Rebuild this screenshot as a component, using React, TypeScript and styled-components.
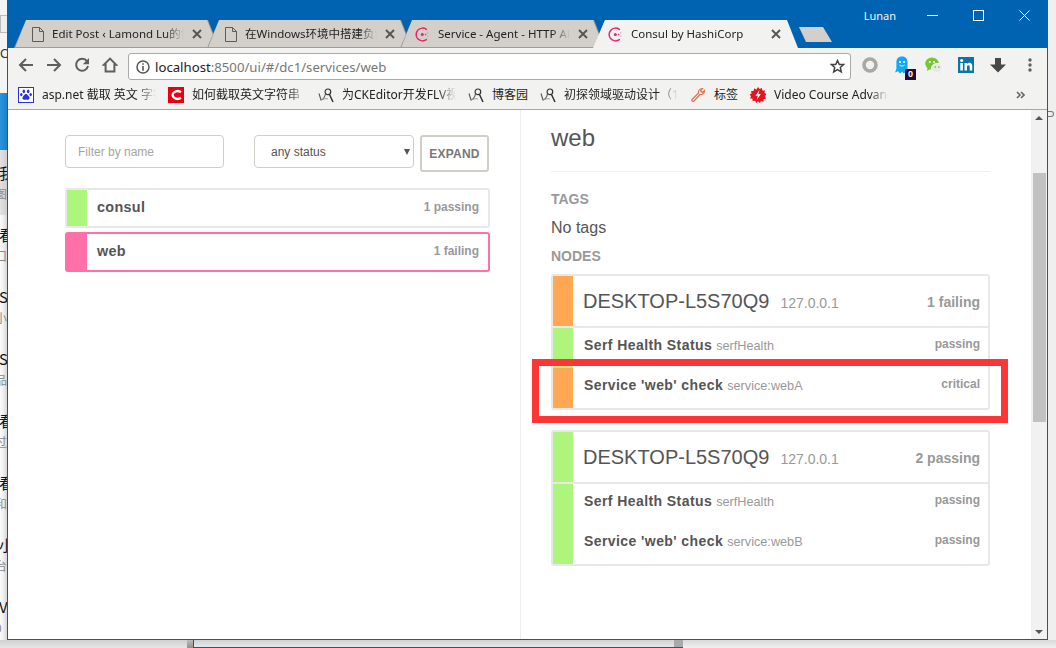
import React from "react";
import styled, { createGlobalStyle, css } from "styled-components";

const Global = createGlobalStyle`
  html, body { margin: 0; padding: 0; width: 1056px; height: 648px; overflow: hidden; background: #efefef; }
  * { box-sizing: border-box; }
  #root { width: 1056px; height: 648px; }
`;

const CHROME_FONT = `"Noto Sans", "Noto Sans CJK SC", sans-serif`;
const PAGE_FONT = `"Liberation Sans", Arial, sans-serif`;
const GREEN = "#aef57d";
const ORANGE = "#ffa752";
const PINK = "#ff70a9";

const Screen = styled.div`
  width: 1056px;
  height: 648px;
  display: grid;
  grid-template-columns: 7px 1041px 8px;
  grid-template-rows: 640px 8px;
  overflow: hidden;
  font-family: ${PAGE_FONT};
`;

/* ---- what lies behind the window ---- */
const BehindLeft = styled.div`
  display: flex;
  flex-direction: column;
  overflow: hidden;
  background: linear-gradient(to right, #fafafa 0, #f2f2f2 40%, #d6d6d6 100%);
`;
const BehindTop = styled.div`
  height: 93px;
  flex: none;
  background: #f4f4f4;
  padding-top: 15px;
  display: flex;
  flex-direction: column;
  gap: 13px;
`;
const BehindBox = styled.div`
  width: 7px;
  height: 18px;
  border: 1px solid #bbb;
  border-right: 0;
  background: #eee;
`;
const BehindLetter = styled.span`
  font: 13px/16px ${PAGE_FONT};
  color: #333;
`;
const BehindBlue = styled.div`
  height: 57px;
  flex: none;
  background: linear-gradient(to right, #2b93de, #1f7fca);
`;
const BehindRow = styled.div<{ $first?: boolean }>`
  flex: none;
  display: flex;
  flex-direction: column;
  overflow: hidden;
  white-space: nowrap;
  font-family: "Noto Sans CJK SC", sans-serif;
  ${(p) =>
    p.$first
      ? css`
          height: 65px;
          padding-top: 13px;
          background: linear-gradient(to right, #e2e2e2, #cfcfcf);
        `
      : css`
          height: 52px;
          margin-top: 10px;
        `}
`;
const BehindBig = styled.div`
  height: 21px;
  width: 16px;
  font-size: 15px;
  line-height: 20px;
  color: #111;
  flex: none;
  margin-left: -1px;
`;
const BehindSmall = styled(BehindBig)`
  font-size: 12px;
  color: #8a8a8a;
  margin-left: -5px;
`;
const BehindRight = styled.div`
  background: #efefef;
  padding-top: 110px;
  color: #777;
`;
const BehindNib = styled.div`
  width: 6px;
  height: 6px;
  border: 1px solid #777;
  border-left: 0;
  border-radius: 0 3px 3px 0;
  margin-top: 1px;
`;
const BehindBottom = styled.div`
  grid-column: 1 / 4;
  display: flex;
`;
const ShadowPart = styled.div`
  width: 187px;
  background: linear-gradient(to bottom, #cfcfcf, #e6e6e6);
`;
const Sliver = styled.div`
  width: 6px;
  background: linear-gradient(to bottom, #bdbdbd, #8f8f8f);
`;
const OtherWindowEdge = styled.div`
  width: 490px;
  background: linear-gradient(to bottom, #d2d2d2, #e8e8e8);
  border-bottom: 1px solid #0063b1;
  border-left: 1px solid #0063b1;
  display: flex;
  justify-content: flex-end;
`;
const EdgeBlock = styled.div`
  width: 9px;
  background: #a9a9a9;
`;
const RestPart = styled.div`
  flex: 1;
  background: linear-gradient(to bottom, #d9d9d9, #f0f0f0);
`;

/* ---- browser window ---- */
const Window = styled.div`
  display: flex;
  flex-direction: column;
  border: 1px solid #0063b1;
  border-top: 0;
  background: #fff;
  min-width: 0;
  min-height: 0;
`;
const TitleBar = styled.div`
  height: 48px;
  flex: none;
  display: flex;
  align-items: flex-end;
  background: #0063b1;
  padding-left: 6px;
`;
const TabStrip = styled.div`
  display: flex;
  height: 28px;
`;
const Tab = styled.div<{ $active?: boolean }>`
  position: relative;
  width: 205px;
  height: 28px;
  margin-right: -12px;
  flex: none;
  display: flex;
  align-items: center;
  padding: 0 17px 0 18px;
  gap: 8px;
  z-index: ${(p) => (p.$active ? 2 : 1)};
  clip-path: polygon(12px 0, calc(100% - 11px) 0, 100% 100%, 0 100%);
  background: ${(p) => (p.$active ? "#f2f2f0" : "#9d9c99")};
  &::before {
    content: "";
    position: absolute;
    inset: 0 0 1px 0;
    background: ${(p) => (p.$active ? "#f2f2f0" : "#d3d0cb")};
    clip-path: polygon(12px 0, calc(100% - 12px) 0, calc(100% - 1.5px) 100%, 1.5px 100%);
  }
  & > * {
    position: relative;
  }
`;
const TabTitle = styled.span`
  flex: 1;
  min-width: 0;
  font: 11.5px/16px ${CHROME_FONT};
  color: #222;
  white-space: nowrap;
  overflow: hidden;
  -webkit-mask-image: linear-gradient(to right, #000 calc(100% - 18px), transparent);
  mask-image: linear-gradient(to right, #000 calc(100% - 18px), transparent);
`;
const NewTab = styled.div`
  width: 33px;
  height: 15px;
  margin: 7px 0 0 13px;
  flex: none;
  background: #d3d0cb;
  position: relative;
  z-index: 1;
  clip-path: polygon(0 0, 24px 0, 100% 100%, 7px 100%);
`;
const UserName = styled.span`
  margin-left: auto;
  align-self: flex-start;
  margin-top: 7px;
  margin-right: 13px;
  font: 11px/18px ${CHROME_FONT};
  color: #f4f4f4;
`;
const WindowControls = styled.div`
  align-self: flex-start;
  display: flex;
`;
const ControlButton = styled.div`
  width: 46px;
  height: 30px;
  display: flex;
  align-items: center;
  justify-content: center;
  color: #fff;
`;

const Toolbar = styled.div`
  height: 34px;
  flex: none;
  display: flex;
  align-items: center;
  background: #f2f2f0;
  padding-left: 4px;
`;
const NavButton = styled.div`
  width: 28px;
  height: 28px;
  flex: none;
  display: flex;
  align-items: center;
  justify-content: center;
`;
const Omnibox = styled.div`
  width: 723px;
  height: 27px;
  margin: 2px 3px 0 4px;
  flex: none;
  display: flex;
  align-items: center;
  gap: 5px;
  padding: 1px 5px 0 7px;
  background: #fff;
  border: 1px solid #aaa;
  border-radius: 3px;
`;
const Url = styled.span`
  flex: 1;
  font: 13.2px/18px ${CHROME_FONT};
  color: #777;
`;
const Host = styled.span`
  color: #222;
`;
const ExtButton = styled.div`
  position: relative;
  width: 32px;
  height: 28px;
  flex: none;
  display: flex;
  align-items: center;
  justify-content: center;
`;
const Badge = styled.span`
  position: absolute;
  left: 19px;
  top: 18px;
  width: 11px;
  height: 11px;
  background: #2a0a33;
  color: #fff;
  font: bold 9px/11px ${PAGE_FONT};
  text-align: center;
`;

const BookmarkBar = styled.div`
  height: 28px;
  flex: none;
  display: flex;
  align-items: center;
  gap: 12px;
  padding: 0 22px 1px 10px;
  background: #f2f2f0;
  border-bottom: 1px solid #a8a8a8;
`;
const Bookmark = styled.div`
  display: flex;
  align-items: center;
  gap: 8px;
  flex: none;
`;
const BookmarkLabel = styled.span<{ $fade?: boolean }>`
  font: 12px/16px ${CHROME_FONT};
  color: #222;
  white-space: nowrap;
  overflow: hidden;
  ${(p) =>
    p.$fade &&
    css`
      width: 114px;
      -webkit-mask-image: linear-gradient(to right, #000 calc(100% - 18px), transparent);
      mask-image: linear-gradient(to right, #000 calc(100% - 18px), transparent);
    `}
`;
const MoreBookmarks = styled.div`
  margin-left: auto;
  display: flex;
  align-items: center;
`;

/* ---- page ---- */
const Content = styled.div`
  flex: 1;
  min-height: 0;
  display: flex;
  background: #fff;
`;
const LeftPane = styled.div`
  width: 513px;
  flex: none;
  padding: 25px 30px 0 57px;
  border-right: 1px solid #eeeeee;
`;
const FilterRow = styled.div`
  display: flex;
  align-items: flex-start;
  margin-bottom: 16px;
`;
const FilterInput = styled.input`
  width: 159px;
  height: 33px;
  padding: 0 12px;
  border: 1px solid #d1cec8;
  border-radius: 4px;
  background: #fff;
  font: 12px ${PAGE_FONT};
  color: #555;
  outline: none;
  &::placeholder {
    color: #a5a5a5;
    opacity: 1;
  }
`;
const SelectWrap = styled.div`
  position: relative;
  margin: 0 6px 0 30px;
  &::after {
    content: "";
    position: absolute;
    right: 4px;
    top: 14px;
    border-left: 3.5px solid transparent;
    border-right: 3.5px solid transparent;
    border-top: 6px solid #555;
  }
`;
const StatusSelect = styled.select`
  display: block;
  width: 160px;
  height: 33px;
  padding: 0 16px;
  appearance: none;
  border: 1px solid #d1cec8;
  border-radius: 4px;
  background: #fff;
  font: 12px ${PAGE_FONT};
  color: #555;
  outline: none;
`;
const ExpandButton = styled.button`
  width: 69px;
  height: 37px;
  padding: 0;
  border: 2px solid #d1cec8;
  border-radius: 3px;
  background: #fff;
  font: bold 12px ${PAGE_FONT};
  letter-spacing: 0.2px;
  color: #777;
`;
const ServiceList = styled.div`
  display: flex;
  flex-direction: column;
  gap: 4px;
`;
const ServiceRow = styled.div<{ $color: string; $selected?: boolean }>`
  height: 40px;
  display: flex;
  align-items: center;
  padding-right: 9px;
  border: 2px solid ${(p) => (p.$selected ? p.$color : "#e8e8e6")};
  border-radius: 3px;
  background: #fff;
`;
const StatusBar = styled.div<{ $color: string }>`
  width: 20px;
  align-self: stretch;
  flex: none;
  background: ${(p) => p.$color};
`;
const ServiceName = styled.span`
  margin-left: 10px;
  font-size: 14.4px;
  font-weight: bold;
  letter-spacing: 0.3px;
  color: #555;
  position: relative;
  top: -1px;
`;
const ServiceCount = styled.span`
  margin-left: auto;
  font-size: 12px;
  font-weight: bold;
  color: #999;
  position: relative;
  top: -1px;
`;

const RightPane = styled.div`
  position: relative;
  flex: 1;
  min-width: 0;
  padding: 13px 41px 0 30px;
`;
const Title = styled.h1`
  margin: 0;
  font-size: 24px;
  line-height: 30px;
  font-weight: normal;
  color: #555;
`;
const Rule = styled.hr`
  margin: 18px 0 0;
  border: 0;
  height: 1px;
  background: #eeeeee;
`;
const SectionLabel = styled.h4`
  margin: 8px 0 0;
  font-size: 14px;
  line-height: 20px;
  font-weight: bold;
  color: #999;
`;
const TagsLabel = styled(SectionLabel)`
  margin-top: 17px;
`;
const TagsText = styled.p`
  margin: 9px 0 0;
  font-size: 16px;
  line-height: 20px;
  color: #555;
`;
const NodeCard = styled.div`
  margin-top: 8px;
  border: 2px solid #e8e8e6;
  border-radius: 3px;
  background: #fff;
  & + & {
    margin-top: 20px;
  }
`;
const NodeHeader = styled.div`
  height: 52px;
  display: flex;
  border-bottom: 2px solid #e8e8e6;
  padding-right: 8px;
`;
const NodeHeadText = styled.div`
  flex: 1;
  display: flex;
  align-items: baseline;
  padding: 12px 0 0 10px;
`;
const NodeName = styled.span`
  font-size: 20px;
  line-height: 26px;
  color: #555;
`;
const NodeIp = styled.span`
  margin-left: 11px;
  font-size: 14px;
  color: #999;
`;
const NodeCount = styled.span`
  margin-left: auto;
  font-size: 14px;
  font-weight: bold;
  color: #999;
  position: relative;
  top: -1px;
`;
const CheckRow = styled.div`
  height: 40px;
  display: flex;
  padding-right: 8px;
`;
const CheckText = styled.div`
  flex: 1;
  display: flex;
  align-items: baseline;
  padding: 8px 0 0 11px;
  line-height: 18px;
`;
const CheckName = styled.span`
  font-size: 14px;
  font-weight: bold;
  letter-spacing: 0.42px;
  color: #555;
`;
const CheckId = styled.span`
  margin-left: 4px;
  font-size: 12.7px;
  color: #999;
`;
const CheckState = styled.span`
  margin-left: auto;
  font-size: 12px;
  font-weight: bold;
  color: #999;
  position: relative;
  top: -2px;
`;
const Highlight = styled.div`
  position: absolute;
  left: 11px;
  top: 249px;
  width: 476px;
  height: 64px;
  border: 7px solid #fd3535;
  pointer-events: none;
`;
const Scrollbar = styled.div`
  width: 16px;
  flex: none;
  display: flex;
  flex-direction: column;
  align-items: center;
  background: #f1f1f1;
`;
const ScrollUp = styled.div`
  margin-top: 6px;
  border-left: 4px solid transparent;
  border-right: 4px solid transparent;
  border-bottom: 4px solid #555;
`;
const ScrollThumb = styled.div`
  width: 13px;
  height: 249px;
  margin-top: 53px;
  background: #c1c1c1;
`;
const ScrollDown = styled.div`
  margin-top: auto;
  margin-bottom: 5px;
  border-left: 4px solid transparent;
  border-right: 4px solid transparent;
  border-top: 4px solid #555;
`;

/* ---- icons ---- */
const DocIcon = () => (
  <svg width="12" height="15" viewBox="0 0 12 15" fill="none" stroke="#5c5c5c" strokeWidth="1" style={{ flex: "none" }}>
    <path d="M.5.5h7l4 4v10H.5zM7.5.5v4h4" />
  </svg>
);
const ConsulIcon = () => (
  <svg width="15" height="15" viewBox="0 0 15 15" fill="none" style={{ flex: "none", marginLeft: -3 }}>
    <path d="M11.400 2.400a6.400 6.400 0 1 0 0 10.200" stroke="#e4286f" strokeWidth="1.500" strokeLinecap="round" />
    <circle cx="7.300" cy="7.500" r="1.500" fill="#e4286f" />
    <circle cx="10.600" cy="7.500" r=".8" fill="#e4286f" />
    <circle cx="12.800" cy="5.900" r=".7" fill="#e98bb0" />
    <circle cx="12.800" cy="9.100" r=".7" fill="#e98bb0" />
  </svg>
);
const CloseIcon = () => (
  <svg width="10" height="10" viewBox="0 0 10 10" stroke="#555" strokeWidth="1.900" style={{ flex: "none" }}>
    <path d="M1 1l8 8M9 1L1 9" />
  </svg>
);
const BackIcon = () => (
  <svg width="16" height="16" viewBox="0 0 16 16" fill="none" stroke="#5f5f5f" strokeWidth="2">
    <path d="M15 8H2M8 2L2 8l6 6" />
  </svg>
);
const ForwardIcon = () => (
  <svg width="16" height="16" viewBox="0 0 16 16" fill="none" stroke="#5f5f5f" strokeWidth="2">
    <path d="M1 8h13M8 2l6 6-6 6" />
  </svg>
);
const ReloadIcon = () => (
  <svg width="16" height="16" viewBox="0 0 16 16" fill="none">
    <path d="M13 4.200A6 6 0 1 0 14 9" stroke="#5f5f5f" strokeWidth="2" />
    <path d="M15 1v6.200H8.800z" fill="#5f5f5f" />
  </svg>
);
const HomeIcon = () => (
  <svg width="16" height="16" viewBox="0 0 16 16" fill="none" stroke="#5f5f5f" strokeWidth="2">
    <path d="M8 1.600L1.800 7.800H3.600V14.500H12.400V7.800H14.200z" />
  </svg>
);
const InfoIcon = () => (
  <svg width="14" height="14" viewBox="0 0 14 14" fill="none" style={{ flex: "none" }}>
    <circle cx="7" cy="7" r="6" stroke="#555" strokeWidth="1.500" />
    <path d="M6.200 3.200h1.600v1.600H6.200zM6.200 6h1.600v4.800H6.200z" fill="#555" />
  </svg>
);
const StarIcon = () => (
  <svg width="15" height="15" viewBox="0 0 15 15" fill="none" stroke="#444" strokeWidth="1.500" style={{ flex: "none" }}>
    <path d="M7.500 1.600l1.800 4h4.300l-3.300 2.900 1 4.400-3.800-2.300-3.800 2.300 1-4.400L1.400 5.600h4.300z" />
  </svg>
);
const RingIcon = () => (
  <svg width="16" height="16" viewBox="0 0 16 16" fill="none">
    <circle cx="8" cy="8" r="6" stroke="#aaa8a2" strokeWidth="3.600" />
  </svg>
);
const GhostIcon = () => (
  <svg width="14" height="18" viewBox="0 0 14 18">
    <path d="M7 .5C3 .5 1.400 3 1.400 6.500V13L0 16.500l3-1.200 2 2.200 2-1.800 2 1.800 2-1.800 2.500.5-1-4V6.500C12.500 3 11 .5 7 .5z" fill="#12a8f6" />
    <circle cx="5" cy="6" r="1" fill="#fff" />
    <circle cx="9" cy="6" r="1" fill="#fff" />
    <path d="M4.500 9c1.500 1.400 3.500 1.400 5 0" stroke="#fff" strokeWidth=".9" fill="none" />
  </svg>
);
const WechatIcon = () => (
  <svg width="18" height="17" viewBox="0 0 18 17">
    <ellipse cx="7" cy="6.500" rx="6.800" ry="6" fill="#78c634" />
    <path d="M2.500 10.500L2 14l3.500-2z" fill="#78c634" />
    <circle cx="4.800" cy="5" r="1" fill="#fff" />
    <circle cx="9" cy="5" r="1" fill="#fff" />
    <ellipse cx="12" cy="11" rx="5.600" ry="4.600" fill="#e9e9e6" stroke="#f7f7f7" strokeWidth=".8" />
    <path d="M14.500 14.500l1 2-3-1.200z" fill="#e9e9e6" />
    <circle cx="10.200" cy="10" r=".8" fill="#888" />
    <circle cx="13.800" cy="10" r=".8" fill="#888" />
  </svg>
);
const LinkedinIcon = () => (
  <svg width="16" height="16" viewBox="0 0 16 16">
    <rect width="16" height="16" fill="#0a75ad" />
    <circle cx="3.600" cy="3.600" r="1.500" fill="#fff" />
    <path d="M2.300 6h2.600v7.600H2.300zM6.500 6H9v1.100c.5-.8 1.400-1.300 2.400-1.300 2 0 2.900 1.200 2.900 3.400v4.400h-2.600V9.800c0-1-.4-1.600-1.300-1.600-1 0-1.400.7-1.400 1.700v3.700H6.500z" fill="#fff" />
  </svg>
);
const DownloadIcon = () => (
  <svg width="16" height="16" viewBox="0 0 16 16">
    <path d="M5 1h6v6.500h5L8 15.500 0 7.500h5z" fill="#484848" />
  </svg>
);
const DotsIcon = () => (
  <svg width="4" height="14" viewBox="0 0 4 14" fill="#5f5f5f">
    <circle cx="2" cy="2" r="1.700" />
    <circle cx="2" cy="7" r="1.700" />
    <circle cx="2" cy="12" r="1.700" />
  </svg>
);
const PawIcon = () => (
  <svg width="16" height="16" viewBox="0 0 16 16" style={{ flex: "none" }}>
    <rect x=".5" y=".5" width="15" height="15" fill="#fff" stroke="#2932e1" />
    <g fill="#2932e1">
      <ellipse cx="5.800" cy="4.400" rx="1.300" ry="1.800" />
      <ellipse cx="10.200" cy="4.400" rx="1.300" ry="1.800" />
      <ellipse cx="3.300" cy="7.600" rx="1.200" ry="1.600" />
      <ellipse cx="12.700" cy="7.600" rx="1.200" ry="1.600" />
      <path d="M8 7c-1.600 0-2 1.600-3 2.600-1 1-.8 3.400 1.200 3.200.8 0 1.200-.3 1.800-.3s1 .3 1.800.3c2 .2 2.200-2.200 1.200-3.200C10 8.600 9.600 7 8 7z" />
    </g>
  </svg>
);
const RedCIcon = () => (
  <svg width="16" height="16" viewBox="0 0 16 16" style={{ flex: "none" }}>
    <rect width="16" height="16" fill="#e60012" />
    <path d="M13 5.200A5 3.800 0 1 0 13 10.800" fill="none" stroke="#fff" strokeWidth="2.400" />
  </svg>
);
const BlogIcon = () => (
  <svg width="16" height="16" viewBox="0 0 16 16" fill="none" style={{ flex: "none" }}>
    <path d="M1 6.500l2 6.500c2.500-.8 4-3.500 4.500-6.500" stroke="#555" strokeWidth="1.100" />
    <path d="M3 13l5-1.500 2 .5" stroke="#999" strokeWidth=".9" />
    <path d="M9.800 2a2.800 2.800 0 1 0 .2 5.600 2.800 2.800 0 0 0-.2-5.600z" stroke="#333" strokeWidth="1.200" />
    <path d="M11.500 7.500L15 15" stroke="#333" strokeWidth="1.500" />
  </svg>
);
const WrenchIcon = () => (
  <svg width="16" height="16" viewBox="0 0 16 16" fill="none" stroke="#e2704f" strokeWidth="1.200" style={{ flex: "none" }}>
    <path d="M2 12.500L8.500 6c-.5-2 .8-4.500 4-4.500l-2 2.300 1.700 1.700 2.300-2c0 3.200-2.500 4.500-4.500 4L4 14c-1 1-3-.5-2-1.500z" />
  </svg>
);
const BurstIcon = () => (
  <svg width="16" height="16" viewBox="0 0 16 16" style={{ flex: "none" }}>
    <path d="M8 0l1.500 2 2.300-1 .6 2.400 2.500 0-.4 2.500 2 1.100L15 9.200l1 2.300-2.400.7-.2 2.500-2.500-.4L9.800 16 8 14.300 6.200 16l-1.100-2.300-2.500.4-.2-2.500L0 11.500l1-2.300L-.5 7.500l2-1.100-.4-2.500 2.500 0 .6-2.400 2.300 1z" fill="#e8131b" />
    <path d="M9.500 3L5.500 8.800h2.300L6.800 13l4-6H8.400z" fill="#fff" />
  </svg>
);
const ChevronsIcon = () => (
  <svg width="9" height="8" viewBox="0 0 9 8" fill="none" stroke="#666" strokeWidth="1.600">
    <path d="M1 1l3 3-3 3M5 1l3 3-3 3" />
  </svg>
);

type Check = { name: string; id: string; state: string; color: string };
type Node = { count: string; color: string; checks: Check[] };

const nodes: Node[] = [
  {
    count: "1 failing",
    color: ORANGE,
    checks: [
      { name: "Serf Health Status", id: "serfHealth", state: "passing", color: GREEN },
      { name: "Service 'web' check", id: "service:webA", state: "critical", color: ORANGE },
    ],
  },
  {
    count: "2 passing",
    color: GREEN,
    checks: [
      { name: "Serf Health Status", id: "serfHealth", state: "passing", color: GREEN },
      { name: "Service 'web' check", id: "service:webB", state: "passing", color: GREEN },
    ],
  },
];

const behind: [string, string][] = [
  ["我", "图"],
  ["看", "口"],
  ["S", "小"],
  ["S", "品"],
  ["看", "过"],
  ["看", "和"],
  ["小", "台"],
  ["V", "0"],
];

export default function App() {
  return (
    <Screen>
      <Global />
      <BehindLeft>
        <BehindTop>
          <BehindBox />
          <BehindLetter>C</BehindLetter>
        </BehindTop>
        <BehindBlue />
        {behind.map(([a, b], i) => (
          <BehindRow key={i} $first={i === 0}>
            <BehindBig>{a}</BehindBig>
            <BehindSmall>{b}</BehindSmall>
          </BehindRow>
        ))}
      </BehindLeft>

      <Window>
        <TitleBar>
          <TabStrip>
            <Tab>
              <DocIcon />
              <TabTitle>Edit Post ‹ Lamond Lu的博客</TabTitle>
              <CloseIcon />
            </Tab>
            <Tab>
              <DocIcon />
              <TabTitle>在Windows环境中搭建负载均衡</TabTitle>
              <CloseIcon />
            </Tab>
            <Tab>
              <ConsulIcon />
              <TabTitle>Service - Agent - HTTP API</TabTitle>
              <CloseIcon />
            </Tab>
            <Tab $active>
              <ConsulIcon />
              <TabTitle>Consul by HashiCorp</TabTitle>
              <CloseIcon />
            </Tab>
            <NewTab />
          </TabStrip>
          <UserName>Lunan</UserName>
          <WindowControls>
            <ControlButton>
              <svg width="11" height="11" viewBox="0 0 11 11" stroke="#fff">
                <path d="M0 5.500h11" />
              </svg>
            </ControlButton>
            <ControlButton>
              <svg width="11" height="11" viewBox="0 0 11 11" fill="none" stroke="#fff">
                <rect x=".5" y=".5" width="10" height="10" />
              </svg>
            </ControlButton>
            <ControlButton>
              <svg width="11" height="11" viewBox="0 0 11 11" stroke="#fff">
                <path d="M.5.5l10 10M10.500.5l-10 10" />
              </svg>
            </ControlButton>
          </WindowControls>
        </TitleBar>

        <Toolbar>
          <NavButton><BackIcon /></NavButton>
          <NavButton><ForwardIcon /></NavButton>
          <NavButton><ReloadIcon /></NavButton>
          <NavButton><HomeIcon /></NavButton>
          <Omnibox>
            <InfoIcon />
            <Url>
              <Host>localhost</Host>:8500/ui/#/dc1/services/web
            </Url>
            <StarIcon />
          </Omnibox>
          <ExtButton><RingIcon /></ExtButton>
          <ExtButton>
            <GhostIcon />
            <Badge>0</Badge>
          </ExtButton>
          <ExtButton><WechatIcon /></ExtButton>
          <ExtButton><LinkedinIcon /></ExtButton>
          <ExtButton><DownloadIcon /></ExtButton>
          <ExtButton><DotsIcon /></ExtButton>
        </Toolbar>

        <BookmarkBar>
          <Bookmark><PawIcon /><BookmarkLabel $fade>asp.net 截取 英文 字符串</BookmarkLabel></Bookmark>
          <Bookmark><RedCIcon /><BookmarkLabel $fade>如何截取英文字符串</BookmarkLabel></Bookmark>
          <Bookmark><BlogIcon /><BookmarkLabel $fade>为CKEditor开发FLV视频</BookmarkLabel></Bookmark>
          <Bookmark><BlogIcon /><BookmarkLabel>博客园</BookmarkLabel></Bookmark>
          <Bookmark><BlogIcon /><BookmarkLabel $fade>初探领域驱动设计（1）为</BookmarkLabel></Bookmark>
          <Bookmark><WrenchIcon /><BookmarkLabel>标签</BookmarkLabel></Bookmark>
          <Bookmark><BurstIcon /><BookmarkLabel $fade>Video Course Advanced</BookmarkLabel></Bookmark>
          <MoreBookmarks><ChevronsIcon /></MoreBookmarks>
        </BookmarkBar>

        <Content>
          <LeftPane>
            <FilterRow>
              <FilterInput placeholder="Filter by name" readOnly />
              <SelectWrap>
                <StatusSelect defaultValue="any">
                  <option value="any">any status</option>
                </StatusSelect>
              </SelectWrap>
              <ExpandButton>EXPAND</ExpandButton>
            </FilterRow>
            <ServiceList>
              <ServiceRow $color={GREEN}>
                <StatusBar $color={GREEN} />
                <ServiceName>consul</ServiceName>
                <ServiceCount>1 passing</ServiceCount>
              </ServiceRow>
              <ServiceRow $color={PINK} $selected>
                <StatusBar $color={PINK} />
                <ServiceName>web</ServiceName>
                <ServiceCount>1 failing</ServiceCount>
              </ServiceRow>
            </ServiceList>
          </LeftPane>

          <RightPane>
            <Title>web</Title>
            <Rule />
            <TagsLabel>TAGS</TagsLabel>
            <TagsText>No tags</TagsText>
            <SectionLabel>NODES</SectionLabel>
            {nodes.map((n) => (
              <NodeCard key={n.count}>
                <NodeHeader>
                  <StatusBar $color={n.color} />
                  <NodeHeadText>
                    <NodeName>DESKTOP-L5S70Q9</NodeName>
                    <NodeIp>127.0.0.1</NodeIp>
                    <NodeCount>{n.count}</NodeCount>
                  </NodeHeadText>
                </NodeHeader>
                {n.checks.map((c) => (
                  <CheckRow key={c.id}>
                    <StatusBar $color={c.color} />
                    <CheckText>
                      <CheckName>{c.name}</CheckName>
                      <CheckId>{c.id}</CheckId>
                      <CheckState>{c.state}</CheckState>
                    </CheckText>
                  </CheckRow>
                ))}
              </NodeCard>
            ))}
            <Highlight />
          </RightPane>

          <Scrollbar>
            <ScrollUp />
            <ScrollThumb />
            <ScrollDown />
          </Scrollbar>
        </Content>
      </Window>

      <BehindRight>
        <BehindNib />
      </BehindRight>

      <BehindBottom>
        <ShadowPart />
        <Sliver />
        <OtherWindowEdge>
          <EdgeBlock />
        </OtherWindowEdge>
        <RestPart />
      </BehindBottom>
    </Screen>
  );
}
